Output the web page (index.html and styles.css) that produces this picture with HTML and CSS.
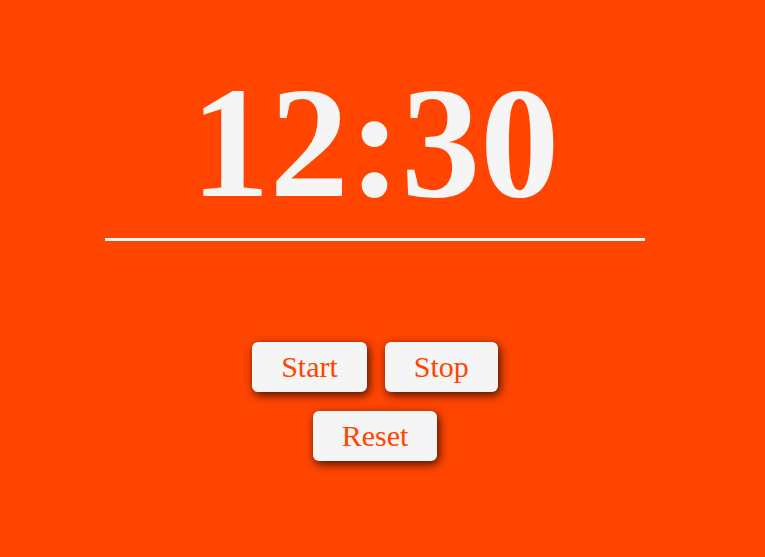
FILE: index.html
```html
<!DOCTYPE html>
<html>
<head>
<meta charset="utf-8">
<link rel="stylesheet" href="styles.css">
</head>
<body>
<main class="app">
  <h1 class="time">12:30</h1>
  <div class="rule"></div>
  <div class="controls">
    <div class="row">
      <button class="btn">Start</button>
      <button class="btn">Stop</button>
    </div>
    <div class="row">
      <button class="btn">Reset</button>
    </div>
  </div>
</main>
</body>
</html>
```
FILE: styles.css
```css
html, body {
  margin: 0;
  padding: 0;
  background: #ff4500;
  height: 100%;
}
body {
  font-family: "Liberation Serif", "Times New Roman", serif;
}
.app {
  width: 750px;
  display: flex;
  flex-direction: column;
  align-items: center;
  padding-top: 51px;
}
.time {
  margin: 0;
  font-size: 158px;
  font-weight: bold;
  line-height: 184px;
  color: #f5f5f5;
}
.rule {
  width: 540px;
  height: 3px;
  background: #f5f5f5;
  margin-top: 3px;
}
.controls {
  margin-top: 101px;
  display: flex;
  flex-direction: column;
  align-items: center;
  gap: 19px;
}
.row {
  display: flex;
  gap: 18px;
}
.btn {
  font-family: "Liberation Serif", "Times New Roman", serif;
  font-size: 30px;
  line-height: 34px;
  padding: 8px 29px;
  border: 0;
  border-radius: 6px;
  background: #f5f5f5;
  color: #ff4500;
  box-shadow: 2px 3px 10px rgba(0, 0, 0, 0.75);
}
```
